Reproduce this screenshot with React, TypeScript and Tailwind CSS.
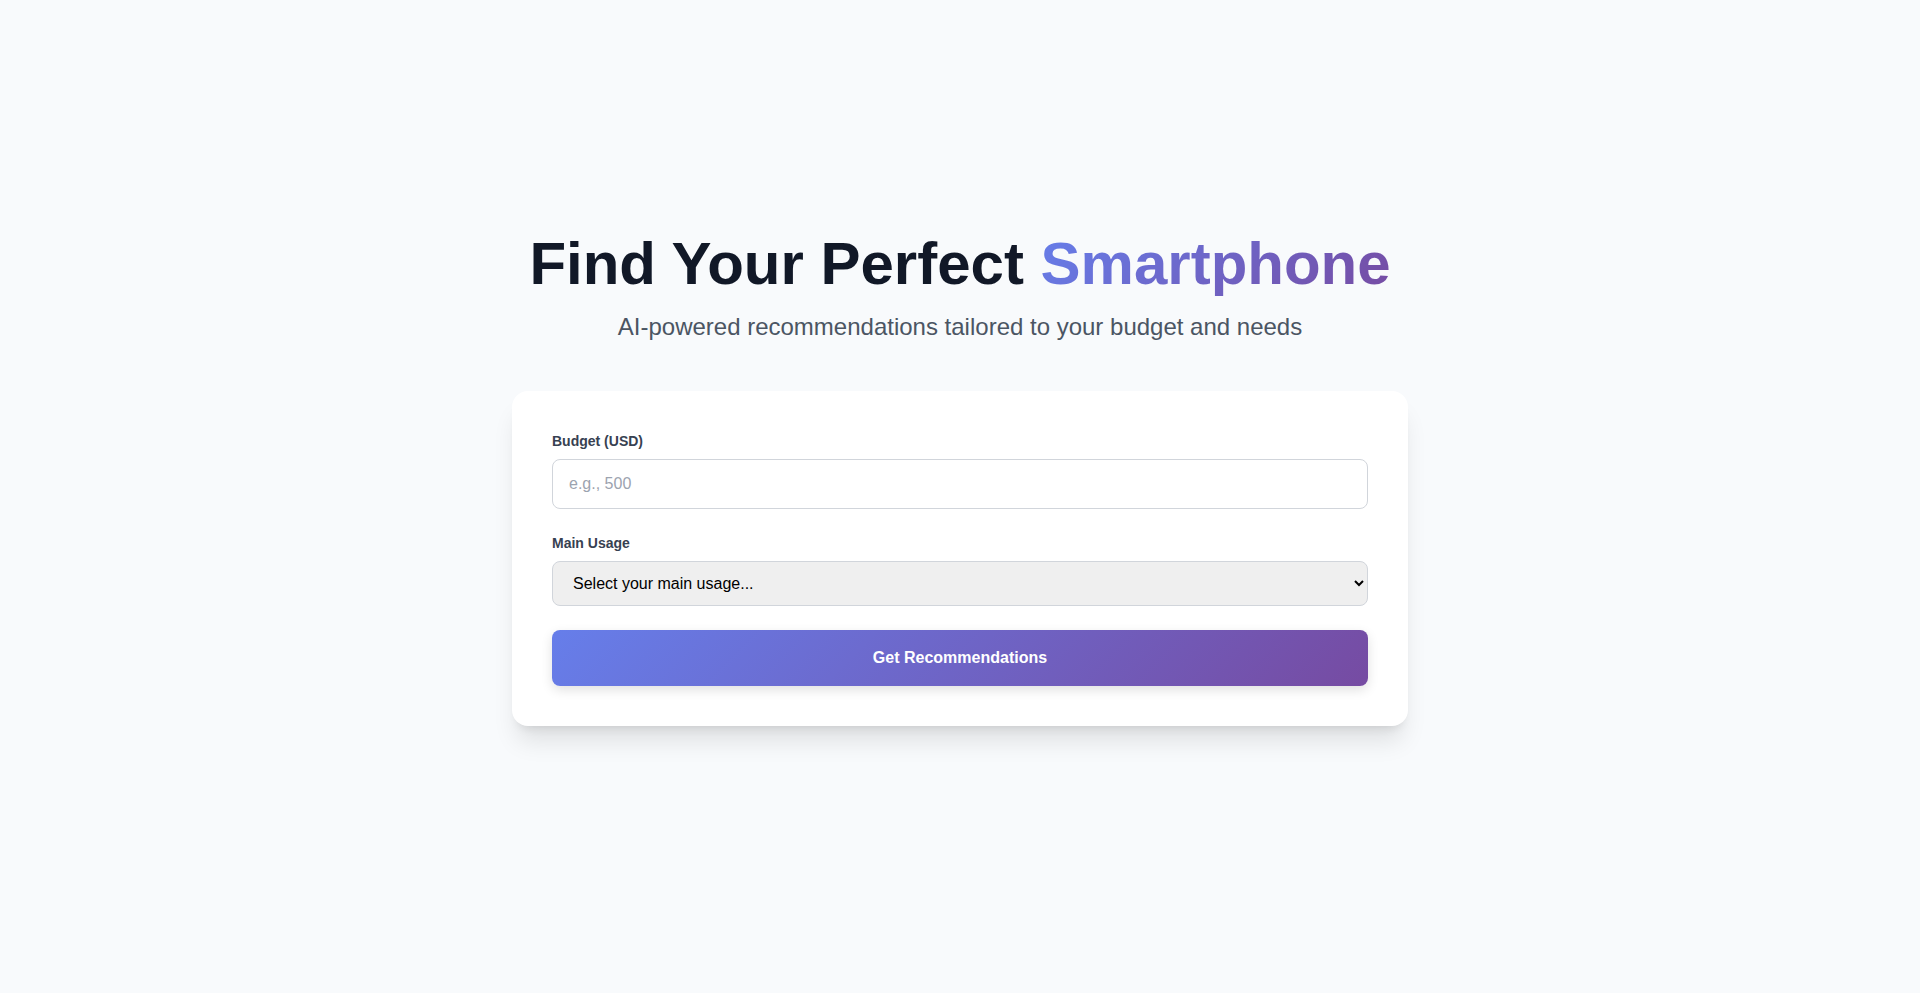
import React from "react";

export default function App() {
  return (
    <div className="min-h-screen bg-[#f8fafc] font-['Liberation_Sans',Arial,sans-serif]">
      <div className="mx-auto w-[896px] pt-[228px]">
        <h1 className="text-center text-[60px] font-bold leading-[1.2] text-[#111827]">
          Find Your Perfect{" "}
          <span className="bg-[linear-gradient(135deg,#667eea_0%,#764ba2_100%)] bg-clip-text text-transparent">
            Smartphone
          </span>
        </h1>
        <p className="mt-[11px] text-center text-2xl text-[#4b5563]">
          AI-powered recommendations tailored to your budget and needs
        </p>

        <form
          className="mt-12 rounded-2xl bg-white p-10 shadow-[0_20px_25px_-5px_rgba(0,0,0,0.1),0_8px_10px_-6px_rgba(0,0,0,0.1)]"
          onSubmit={(e) => e.preventDefault()}
        >
          <div className="mb-6">
            <label htmlFor="budget" className="mb-2 block text-sm font-semibold text-[#374151]">
              Budget (USD)
            </label>
            <input
              id="budget"
              type="number"
              placeholder="e.g., 500"
              className="block w-full rounded-lg border border-[#d1d5db] bg-white px-4 py-3 text-base text-[#111827] placeholder:text-[#9ca3af]"
            />
          </div>

          <div className="mb-6">
            <label htmlFor="usage" className="mb-2 block text-sm font-semibold text-[#374151]">
              Main Usage
            </label>
            <select
              id="usage"
              defaultValue=""
              className="block w-full rounded-lg border border-[#d1d5db] bg-[#efefef] px-4 py-3 text-base text-black"
            >
              <option value="">Select your main usage...</option>
              <option value="gaming">Gaming</option>
              <option value="photography">Photography</option>
              <option value="business">Business</option>
              <option value="everyday">Everyday use</option>
            </select>
          </div>

          <button
            type="submit"
            className="block w-full rounded-lg bg-[linear-gradient(135deg,#667eea_0%,#764ba2_100%)] py-4 text-base font-semibold text-white shadow-[0_4px_12px_rgba(0,0,0,0.12)]"
          >
            Get Recommendations
          </button>
        </form>
      </div>
    </div>
  );
}
